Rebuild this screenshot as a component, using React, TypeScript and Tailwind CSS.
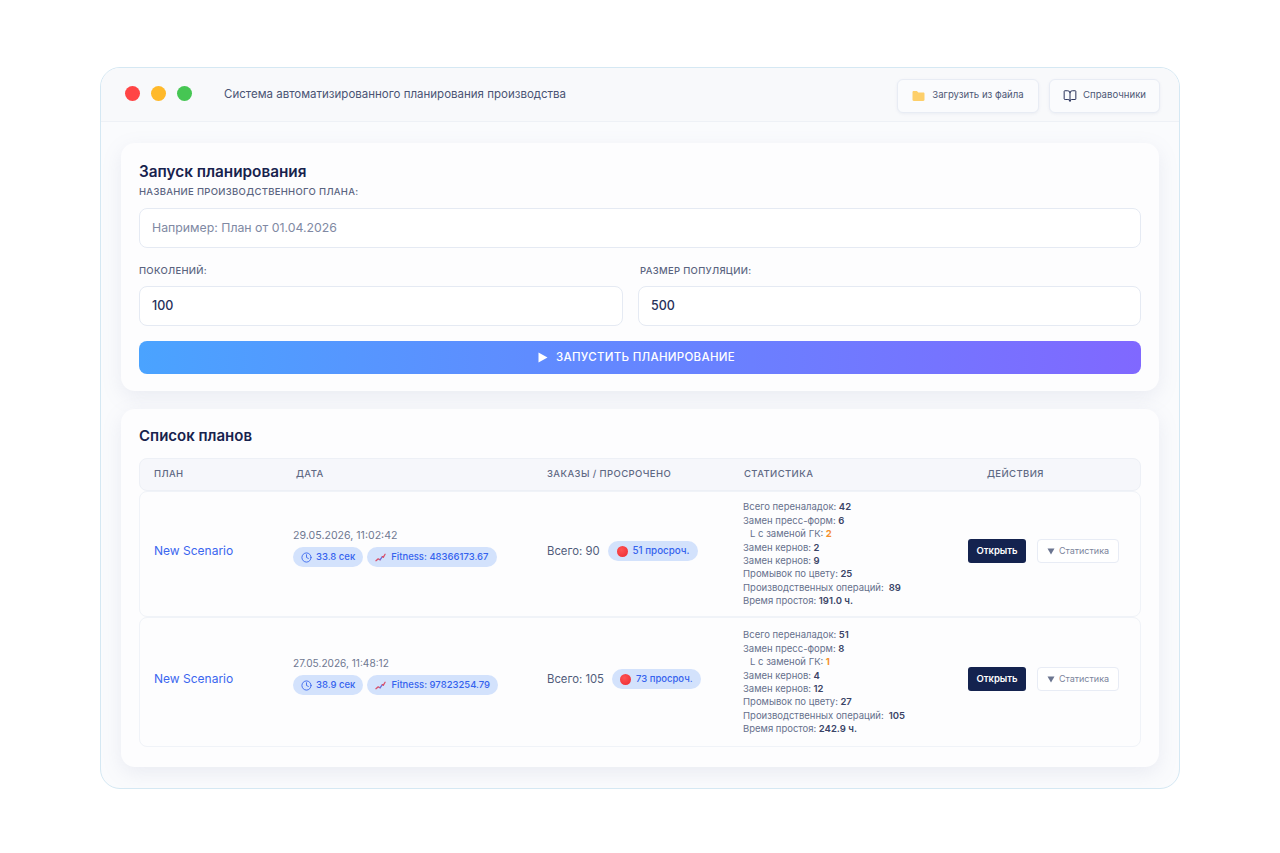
import { BookOpen, Clock } from "lucide-react";

type Stat = { label: string; value: string; sub?: boolean; gap?: boolean };
type Plan = {
  date: string; dateCls: string; time: string; fitness: string; total: string; late: string; lateCls: string; stats: Stat[]; h: string;
};

const plans: Plan[] = [
  {
    date: "29.05.2026, 11:02:42", dateCls: "text-[10.6px]", time: "33.8 сек", fitness: "Fitness: 48366173.67", total: "Всего: 90", late: "51 просроч.", lateCls: "pl-[9px] text-[9.8px]", h: "h-[126px]",
    stats: [
      { label: "Всего переналадок:", value: "42" },
      { label: "Замен пресс-форм:", value: "6" },
      { label: "L с заменой ГК:", value: "2", sub: true },
      { label: "Замен кернов:", value: "2" },
      { label: "Замен кернов:", value: "9" },
      { label: "Промывок по цвету:", value: "25" },
      { label: "Производственных операций:", value: "89", gap: true },
      { label: "Время простоя:", value: "191.0 ч." },
    ],
  },
  {
    date: "27.05.2026, 11:48:12", dateCls: "text-[10.1px]", time: "38.9 сек", fitness: "Fitness: 97823254.79", total: "Всего: 105", late: "73 просроч.", lateCls: "pl-[8px] text-[9.5px]", h: "h-[130px]",
    stats: [
      { label: "Всего переналадок:", value: "51" },
      { label: "Замен пресс-форм:", value: "8" },
      { label: "L с заменой ГК:", value: "1", sub: true },
      { label: "Замен кернов:", value: "4" },
      { label: "Замен кернов:", value: "12" },
      { label: "Промывок по цвету:", value: "27" },
      { label: "Производственных операций:", value: "105", gap: true },
      { label: "Время простоя:", value: "242.9 ч." },
    ],
  },
];

const grid = "grid grid-cols-[153px_254px_196px_225px_1fr] items-center";

function Chart() {
  return (
    <svg width="11" height="11" viewBox="0 0 12 12" fill="none" strokeWidth="1.4" strokeLinecap="round" strokeLinejoin="round">
      <path d="M1 9.500l2.500-2 2 1" stroke="#d9506a" />
      <path d="M5.500 8.500L8 5" stroke="#6a6fd8" />
      <path d="M8 5l1 .8L11 2.500" stroke="#d9506a" />
    </svg>
  );
}

function Pill({ children, className = "" }: { children: React.ReactNode; className?: string }) {
  return (
    <span className={`inline-flex h-[20px] items-center rounded-full bg-[#d3e2fc] font-medium text-[#3563ee] ${className}`}>
      {children}
    </span>
  );
}

function Row({ p }: { p: Plan }) {
  return (
    <div className={`${grid} ${p.h} rounded-[8px] border border-[#f0f3f8] bg-[#fdfdfe]`}>
      <div className="pb-[6px] pl-[14px] text-[12px] text-[#3b66ef]">New Scenario</div>
      <div className="flex flex-col gap-[5px] pb-[12px]">
        <div className={`${p.dateCls} leading-[13px] text-[#6f7891]`}>{p.date}</div>
        <div className="flex gap-[4px]">
          <Pill className="gap-[4px] pl-[8px] pr-[8px] text-[9.5px]">
            <Clock size={11} strokeWidth={1.9} />
            {p.time}
          </Pill>
          <Pill className="gap-[5px] pl-[8px] pr-[8px] text-[9.5px]">
            <Chart />
            {p.fitness}
          </Pill>
        </div>
      </div>
      <div className="flex items-center gap-[8px] pb-[6px]">
        <span className="text-[11.3px] text-[#515c7a]">{p.total}</span>
        <Pill className={`gap-[5px] pr-[8px] ${p.lateCls}`}>
          <span className="h-[11px] w-[11px] rounded-full bg-[radial-gradient(circle_at_40%_35%,#ff5252,#ec2a32)]" />
          {p.late}
        </Pill>
      </div>
      <div className="text-[9.5px] leading-[13.4px] text-[#66708c]">
        {p.stats.map((s, i) => (
          <div key={i} className={s.sub ? "pl-[7px]" : ""}>
            {s.label}
            <span className={`${s.gap ? "ml-[5px]" : "ml-[2.5px]"} ${s.sub ? "font-bold text-[#f5902e]" : "font-semibold text-[#3a4467]"}`}>{s.value}</span>
          </div>
        ))}
      </div>
      <div className="flex items-center gap-[11px] pb-[6px]">
        <button className="h-[24px] w-[58px] rounded-[3px] bg-[#14234f] text-[9.5px] font-semibold text-white">Открыть</button>
        <button className="flex h-[24px] w-[82px] items-center justify-center gap-[4px] rounded-[4px] border border-[#e8ecf5] bg-white text-[9px] text-[#7b849c]">
          <svg width="8" height="7" viewBox="0 0 8 7"><path d="M0.500 0.500h7L4 6.500z" fill="#6b7590" /></svg>
          Статистика
        </button>
      </div>
    </div>
  );
}

function Label({ children }: { children: React.ReactNode }) {
  return <div className="text-[9.5px] font-medium uppercase leading-[12px] tracking-[0.3px] text-[#5a6480]">{children}</div>;
}

const field = "flex items-center rounded-[8px] border border-[#e5eaf3] bg-white pl-[12px]";
const card = "rounded-[14px] bg-[#fdfdfe] px-[18px] shadow-[0_6px_20px_rgba(120,135,170,0.13)]";
const th = "text-[9.5px] font-medium uppercase tracking-[0.4px] text-[#5f6984]";
const headBtn = "flex h-[34px] items-center justify-center rounded-[6px] border border-[#e8ecf4] bg-[#fafbfd] text-[9.6px] text-[#4d5775] shadow-[0_1px_3px_rgba(120,135,170,0.1)]";

export default function App() {
  return (
    <div className="flex h-[853px] w-[1280px] justify-center bg-white pt-[67px] font-['Inter',sans-serif]">
      <div className="h-[722px] w-[1080px] overflow-hidden rounded-[20px] border border-[#d5e8f3] bg-[#fafbfd]">
        <header className="flex h-[54px] items-center border-b border-[#eef1f6] bg-[#f8f9fb] pl-[24px] pr-[19px]">
          <div className="mb-[2px] flex gap-[11px]">
            <span className="h-[15px] w-[15px] rounded-full bg-[#ff4545]" />
            <span className="h-[15px] w-[15px] rounded-full bg-[#ffb92a]" />
            <span className="h-[15px] w-[15px] rounded-full bg-[#46c653]" />
          </div>
          <div className="ml-[32px] text-[11.5px] text-[#4a5474]">Система автоматизированного планирования производства</div>
          <div className="ml-auto mt-[2px] flex gap-[10px]">
            <button className={`${headBtn} w-[142px] gap-[7px]`}>
              <svg width="13" height="12" viewBox="0 0 13 12"><path d="M0.500 2.200C0.500 1.500 1 1 1.700 1h3.200l1.400 1.400h5c.7 0 1.200.5 1.200 1.200v6.200c0 .7-.5 1.200-1.200 1.200H1.700c-.7 0-1.200-.5-1.200-1.200z" fill="#fdcf6a" /></svg>
              Загрузить из файла
            </button>
            <button className={`${headBtn} w-[111px] gap-[6px]`}>
              <BookOpen size={14} strokeWidth={1.7} className="text-[#27315a]" />
              Справочники
            </button>
          </div>
        </header>

        <main className="flex flex-col gap-[18px] px-[20px] pt-[21px]">
          <section className={`${card} h-[248px] pt-[19px]`}>
            <h2 className="text-[15.3px] font-semibold leading-[19px] text-[#17224d]">Запуск планирования</h2>
            <div className="mt-[5px]"><Label>Название производственного плана:</Label></div>
            <div className={`${field} mt-[10px] h-[40px] text-[12.3px] text-[#8089a3]`}>Например: План от 01.04.2026</div>
            <div className="mt-[17px] grid grid-cols-[484px_1fr] gap-[15px]">
              <div>
                <Label>Поколений:</Label>
                <div className={`${field} mt-[9px] h-[40px] text-[12.5px] font-medium text-[#27315a]`}>100</div>
              </div>
              <div>
                <div className="pl-[2px]"><Label>Размер популяции:</Label></div>
                <div className={`${field} mt-[9px] h-[40px] text-[12.5px] font-medium text-[#27315a]`}>500</div>
              </div>
            </div>
            <button className="mt-[15px] flex h-[33px] w-full items-center justify-center gap-[8px] rounded-[8px] bg-[linear-gradient(90deg,#4aa3ff,#8068ff)] pr-[7px] text-[11.5px] font-medium tracking-[0.3px] text-white">
              <svg width="10" height="11" viewBox="0 0 10 11"><path d="M0.500 0.500L9.500 5.500L0.500 10.500z" fill="#fff" /></svg>
              ЗАПУСТИТЬ ПЛАНИРОВАНИЕ
            </button>
          </section>

          <section className={`${card} h-[358px] pt-[17px]`}>
            <h2 className="text-[15px] font-semibold leading-[19px] text-[#17224d]">Список планов</h2>
            <div className={`${grid} mt-[13px] h-[33px] rounded-[8px] border border-[#edf0f6] bg-[#f6f7fb]`}>
              <div className={`${th} pl-[14px]`}>План</div>
              <div className={`${th} pl-[3px]`}>Дата</div>
              <div className={th}>Заказы / Просрочено</div>
              <div className={`${th} pl-[1px]`}>Статистика</div>
              <div className={`${th} pl-[19px]`}>Действия</div>
            </div>
            {plans.map((p) => <Row key={p.date} p={p} />)}
          </section>
        </main>
      </div>
    </div>
  );
}
